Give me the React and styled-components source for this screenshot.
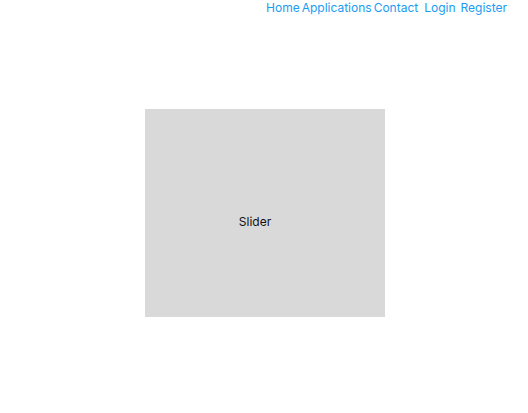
import React from "react";
import styled, { createGlobalStyle } from "styled-components";

const Global = createGlobalStyle`
  html, body { margin: 0; padding: 0; background: #fff; }
  body { font-family: Inter, sans-serif; font-size: 12px; }
`;

const Page = styled.div`
  width: 528px;
  height: 413px;
  display: flex;
  flex-direction: column;
`;

const Nav = styled.nav`
  display: flex;
  justify-content: flex-end;
  align-items: center;
  height: 16px;
  padding: 0 21px 0 0;
  gap: 2px;
`;

const NavLink = styled.a`
  color: #1a9cf2;
  text-decoration: none;
  font-family: Inter, sans-serif;
  font-size: 12px;
  line-height: 16px;
  margin-left: ${(p) => p.$extra || 0}px;
`;

const Main = styled.main`
  display: flex;
  justify-content: flex-start;
  padding: 93px 0 0 145px;
`;

const Slider = styled.div`
  width: 240px;
  height: 208px;
  background: #d9d9d9;
  display: flex;
  align-items: center;
  justify-content: center;
  padding: 16px 20px 0 0;
  box-sizing: border-box;
  color: #111;
  font-family: Inter, sans-serif;
  font-size: 12px;
`;

export default function App() {
  return (
    <Page>
      <Global />
      <Nav>
        <NavLink href="#">Home</NavLink>
        <NavLink href="#">Applications</NavLink>
        <NavLink href="#">Contact</NavLink>
        <NavLink href="#" $extra={4}>Login</NavLink>
        <NavLink href="#" $extra={3}>Register</NavLink>
      </Nav>
      <Main>
        <Slider>Slider</Slider>
      </Main>
    </Page>
  );
}
